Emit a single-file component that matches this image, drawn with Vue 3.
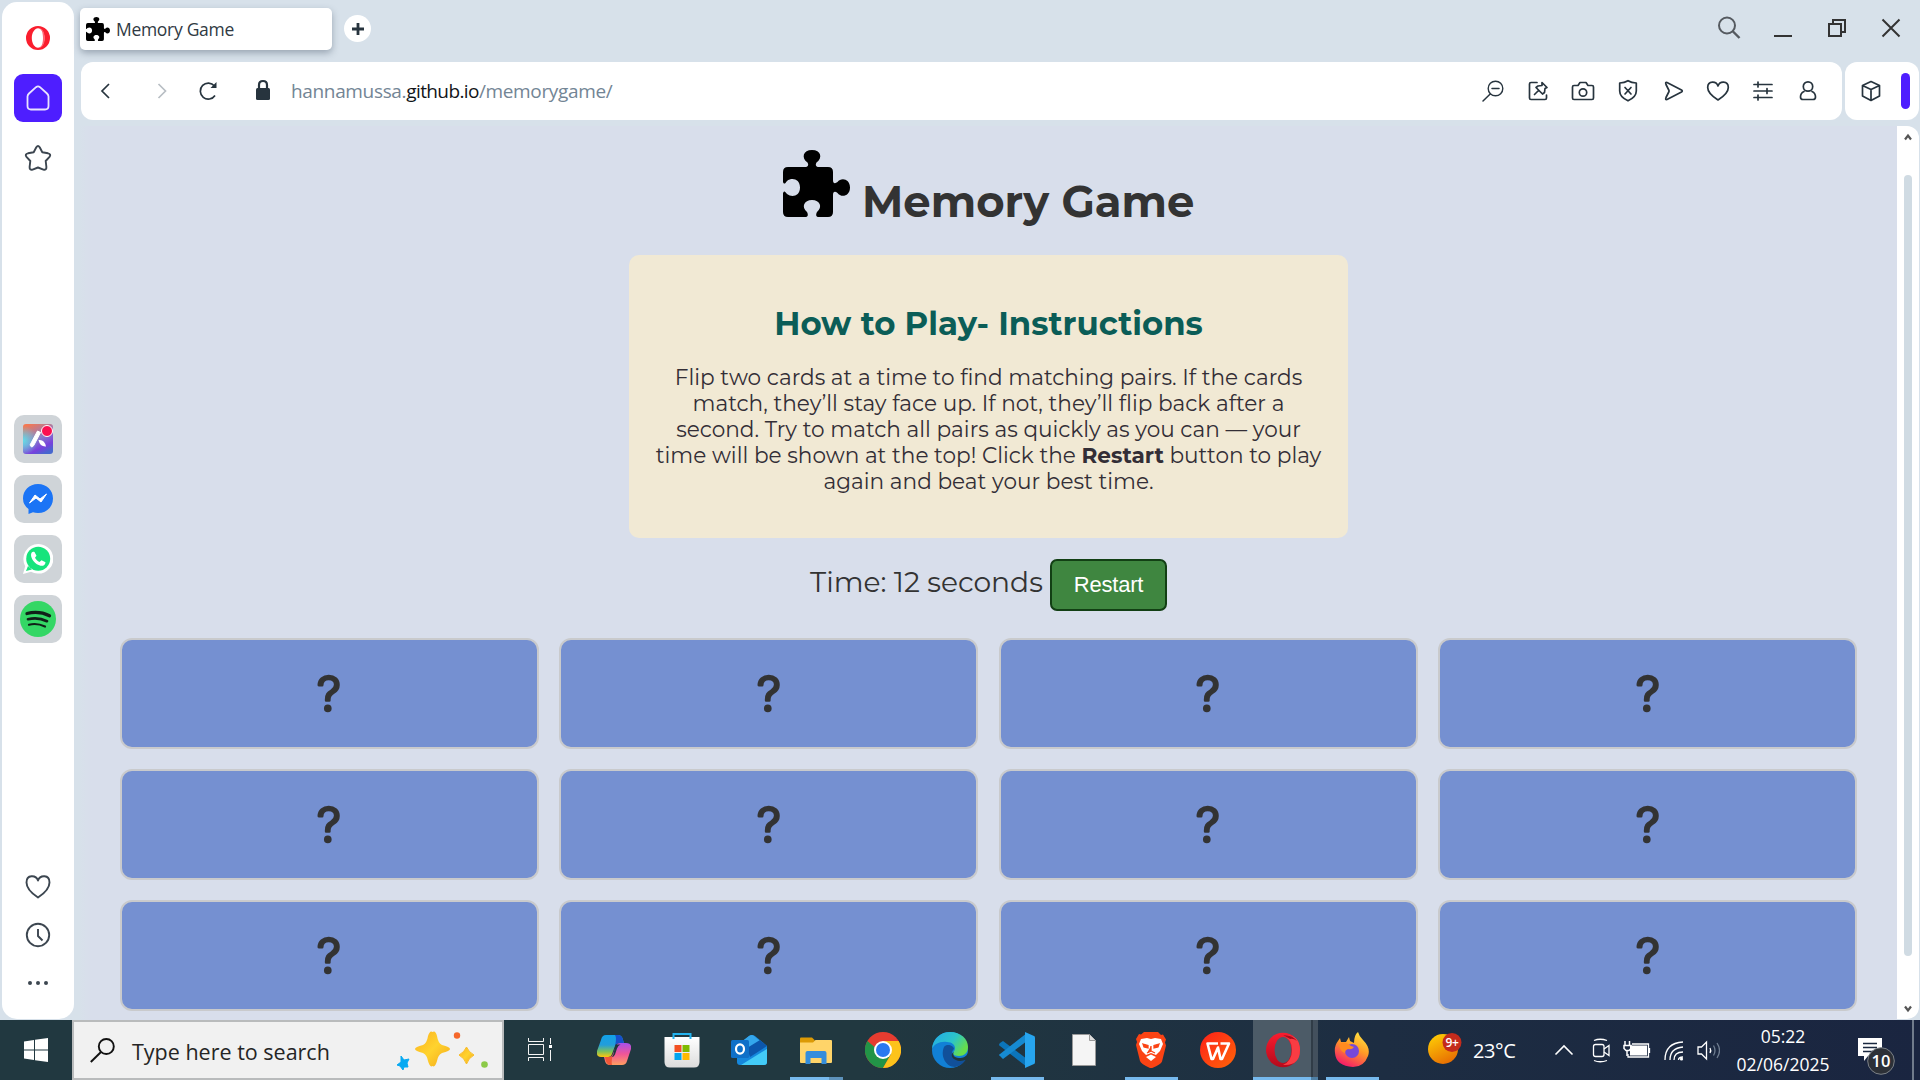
<script setup>
const cards = Array.from({ length: 12 }, (_, i) => i)
const lines = [
  'Flip two cards at a time to find matching pairs. If the cards',
  'match, they’ll stay face up. If not, they’ll flip back after a',
  'second. Try to match all pairs as quickly as you can — your'
]
const puzzle = 'M5 17H22C25 17 26 15 24.500 12.500C18 8 20 0 29 0C38 0 40 8 33.500 12.500C32 15 33 17 36 17H45Q50 17 50 22V30C50 33.500 52 34 54.500 32C58 27 67 28.500 67 37.500C67 46.500 58 48 54.500 43C52 41 50 41.500 50 45V62Q50 67 45 67H36C33 67 32.500 65 34 62C40 57 37 50 29 50C21 50 18 57 24 62C25.500 65 25 67 22 67H5Q0 67 0 62V43C1 40.500 2 41 4 44C9 48 17 46 17 37.500C17 29 9 27 4 31C2 34 1 34.500 0 32V22Q0 17 5 17Z'
</script>

<template>
  <div class="desktop">
    <div class="browser">
      <aside class="sidebar">
        <div class="side-top">
          <svg class="opera" width="24" height="24" viewBox="0 0 24 24"><path fill="#fa1e2e" fill-rule="evenodd" d="M12 0a12 12 0 1 0 0 24 12 12 0 0 0 0-24zm0 2.200c3.300 0 6.500 4.500 6.500 9.800s-3.200 9.800-6.500 9.800S5.800 17.300 5.800 12 8.700 2.200 12 2.200z"/><path d="M12.500 2.200c3 0 4.500 4.300 4.500 9.800s-1.500 9.800-4.500 9.800c4 .7 6.300-4.300 6.300-9.800s-2.300-10.500-6.300-9.800z" fill="#ff6470"/></svg>
          <div class="home"><svg width="24" height="26" viewBox="0 0 24 26"><path d="M1.500 11.500Q1.500 10 3 8.500L10 2.200Q12 .5 14 2.200L21 8.500Q22.500 10 22.500 11.500V21Q22.500 24.500 19 24.500H5Q1.500 24.500 1.500 21Z" fill="none" stroke="#e9e4ff" stroke-width="1.800"/></svg></div>
          <svg class="star" width="28" height="28" viewBox="0 0 28 28"><path d="M12.300 3.200Q14 .8 15.700 3.200L18.300 8.200L24 9.300Q27.500 10.200 25.500 12.800L21.700 17L22.400 23Q22.500 26.500 19.400 25.600L14 23.500L8.600 25.600Q5.500 26.500 5.600 23L6.300 17L2.500 12.800Q.5 10.200 4 9.300L9.700 8.200Z" fill="none" stroke="#3c4650" stroke-width="1.900" stroke-linejoin="round"/></svg>
        </div>
        <div class="side-apps">
          <div class="app-tile">
            <svg width="30" height="30" viewBox="0 0 30 30">
              <defs><linearGradient id="aria" x1="0.2" y1="0" x2="0.7" y2="1"><stop offset="0" stop-color="#f57850"/><stop offset=".5" stop-color="#8a7ec8"/><stop offset=".8" stop-color="#7840dd"/><stop offset="1" stop-color="#4767ce"/></linearGradient><radialGradient id="aria2" cx="0" cy=".55" r=".5"><stop offset="0" stop-color="#60dcea"/><stop offset="1" stop-color="#60dcea" stop-opacity="0"/></radialGradient></defs>
              <rect width="30" height="30" rx="3" fill="url(#aria)"/><rect width="30" height="30" rx="3" fill="url(#aria2)"/>
              <path d="M14.500 7l3 1.500L11 21q-1 2-2.500 2L7 21Z" fill="#fff" stroke="#fff" stroke-linejoin="round"/><path d="M15.500 16q6-1 7.500 6.500Q17 23 15.500 16z" fill="#fff"/>
            </svg>
            <i class="dot"></i>
          </div>
          <div class="app-tile"><svg width="30" height="30" viewBox="0 0 30 30"><path d="M15 0C24 0 30 6.500 30 14.500S24 29 15 29q-3 0-5-.7L5.500 30V25Q0 21 0 14.500C0 6.500 6 0 15 0Z" fill="#1b74f5"/><path d="M6.500 19L12 11l5 4L23.500 10 18 18l-5-4Z" fill="#fff" stroke="#fff" stroke-linejoin="round"/></svg></div>
          <div class="app-tile"><svg width="30" height="30" viewBox="0 0 30 30"><path d="M15 0a15 14.800 0 1 1-7 27.700L0 30l2.200-7.800A15 15 0 0 1 15 0Z" fill="#fff"/><circle cx="15.200" cy="14.800" r="12" fill="#16e47c"/><path d="M5 22l-2 5 6-1.500z" fill="#16e47c"/><path d="M8 11c0-3 2-4 3.500-3l2 3.700-1.500 2c1 2 2.500 3.200 4.500 4.300l2-1.800 4 2c-.3 3-2.500 4-5 3.500-5-1-9.500-6.700-9.500-10.700z" fill="#fff"/></svg></div>
          <div class="app-tile"><svg width="36" height="36" viewBox="0 0 36 36"><circle cx="18" cy="18" r="18" fill="#34d765"/><g fill="none" stroke="#102018" stroke-linecap="round"><path d="M7 12.500q12-3 22.500 2.200" stroke-width="3.300"/><path d="M8 18.200q10-2.500 19 2" stroke-width="2.700"/><path d="M9 23.700q8-2 16 1.800" stroke-width="2.200"/></g></svg></div>
        </div>
        <div class="side-bottom">
          <svg width="26" height="24" viewBox="0 0 26 24"><path d="M13 22.500Q1.500 15 1.500 7.500 1.500 1.500 6.500 1.300 11.500 1 13 5.500 14.500 1 19.500 1.300 24.500 1.500 24.500 7.500 24.500 15 13 22.500Z" fill="none" stroke="#3c4650" stroke-width="1.900" stroke-linejoin="round"/></svg>
          <svg width="26" height="26" viewBox="0 0 26 26" fill="none" stroke="#3c4650" stroke-width="1.900"><circle cx="13" cy="13" r="11.200"/><path d="M13 7v7l4.500 4.500"/></svg>
          <svg width="22" height="4" viewBox="0 0 22 4" fill="#3c4650"><circle cx="3" cy="2" r="2"/><circle cx="11" cy="2" r="2"/><circle cx="19" cy="2" r="2"/></svg>
        </div>
      </aside>

      <div class="main">
        <div class="tabs">
          <div class="tab"><svg width="24" height="24" viewBox="0 0 67 67"><path :d="puzzle"/></svg><span>Memory Game</span></div>
          <div class="plus"><svg width="12" height="12" viewBox="0 0 12 12"><path d="M6 0v12M0 6h12" stroke="#27343e" stroke-width="2.800"/></svg></div>
          <div class="win">
            <svg width="54" height="30" viewBox="0 0 54 30" fill="none" stroke="#555a60" stroke-width="2"><circle cx="25" cy="11.500" r="8"/><path d="M30.500 17l7 7" stroke-width="2.400"/></svg>
            <svg width="54" height="30" viewBox="0 0 54 30"><path d="M18 22h18" stroke="#333" stroke-width="2"/></svg>
            <svg width="54" height="30" viewBox="0 0 54 30" fill="none" stroke="#333" stroke-width="2"><path d="M19 10h12v12H19zM23 10V6h12v12h-4"/></svg>
            <svg width="54" height="30" viewBox="0 0 54 30" stroke="#333" stroke-width="2"><path d="M18.500 5.500l17 17M35.500 5.500l-17 17"/></svg>
          </div>
        </div>

        <div class="bars">
          <div class="address">
            <svg width="196" height="30" viewBox="0 0 196 30" fill="none" stroke="#27343e" stroke-width="1.700"><path d="M28 8l-7 7 7 7"/><path d="M77.500 8l7 7-7 7" stroke="#b8bec4"/><path d="M134 19.500A8 8 0 1 1 133.500 10"/><path d="M135.500 6v6h-6z" fill="#27343e" stroke="none"/><rect x="175" y="12" width="14" height="12" rx="1.500" fill="#27343e" stroke="none"/><path d="M178 13V9q0-4 4-4t4 4v4" stroke-width="2.200"/></svg>
            <div class="url"><span class="u1">hannamussa.</span><span class="u2">github.io</span><span class="u3">/memorygame/</span></div>
            <div class="tools">
              <svg viewBox="0 0 24 24"><circle cx="14.500" cy="9.500" r="7.300" stroke-width="1.400"/><path d="M11 9.500h7M9.200 15L2 22" stroke-width="1.500"/></svg>
              <svg viewBox="0 0 24 24"><path d="M11 3.500H5Q3.500 3.500 3.500 5V19Q3.500 20.500 5 20.500H19Q20.500 20.500 20.500 19V16M8.500 15.500l4-4M16 3.500l5 5-2 1-.5 4-2 1.500-6.500-6.500 2-1.500 4-.5z"/></svg>
              <svg viewBox="0 0 24 24"><path d="M3 6.500h4L9 3.500h6l2 3h4q1.500 0 1.500 1.500v11q0 1.500-1.500 1.500H3Q1.500 20.500 1.500 19V8Q1.500 6.500 3 6.500Z"/><circle cx="12" cy="13.500" r="3.700"/></svg>
              <svg viewBox="0 0 24 24"><path d="M12 1.700Q15.500 4 20.300 4V12Q20.300 18 12 21.800 3.700 18 3.700 12V4Q8.500 4 12 1.700ZM9 8.500l6 6.500M15 8.500L9 15"/></svg>
              <svg viewBox="0 0 24 24"><path d="M6 3.500L20.500 11Q22 12 20.500 13L6 20.500Q4 21 5 18.500L8 12.500V11.500L5 5.500Q4 3 6 3.500Z"/></svg>
              <svg viewBox="0 0 24 24"><path d="M12 21Q1.700 14.500 1.700 8.500 1.700 3.500 6.500 3.200 10.500 3 12 7 13.500 3 17.500 3.200 22.300 3.500 22.300 8.500 22.300 14.500 12 21Z"/></svg>
              <svg viewBox="0 0 24 24"><path d="M3 5.500h18M3 12h18M3 18.500h18M7 3v5M16 9.500v5M7 16v5"/></svg>
              <svg viewBox="0 0 24 24"><circle cx="12" cy="7.500" r="4.700"/><path d="M8 12.500Q4.500 14 4.500 18 4.500 20.500 7 20.500H17Q19.500 20.500 19.500 18 19.500 14 16 12.500"/></svg>
            </div>
          </div>
          <div class="ext"><svg width="24" height="24" viewBox="0 0 24 24" fill="none" stroke="#27343e" stroke-width="1.700" stroke-linejoin="round"><path d="M12 2.500l8.500 4v10.500L12 21.500 3.500 17V6.500ZM3.500 6.500L12 10.500l8.500-4M12 10.500v11"/></svg><i></i></div>
        </div>

        <div class="view">
          <div class="page">
            <h1><svg width="67" height="67" viewBox="0 0 67 67"><path :d="puzzle"/></svg><span>Memory Game</span></h1>
            <section class="howto">
              <h2>How to Play- Instructions</h2>
              <p>
                <span v-for="(l, i) in lines" :key="i">{{ l }}</span>
                <span>time will be shown at the top! Click the <b>Restart</b> button to play</span>
                <span>again and beat your best time.</span>
              </p>
            </section>
            <div class="status"><span>Time: 12 seconds</span><button>Restart</button></div>
            <div class="grid">
              <div v-for="c in cards" :key="c" class="card"><svg width="60" height="60" viewBox="0 0 60 60"><text x="30" y="47" text-anchor="middle">?</text></svg></div>
            </div>
          </div>
          <div class="scroll">
            <svg width="10" height="8" viewBox="0 0 10 8"><path d="M2 6.500l3-4 3 4" fill="none" stroke="#555" stroke-width="2.200"/></svg>
            <i></i>
            <svg width="10" height="8" viewBox="0 0 10 8"><path d="M2 1.500l3 4 3-4" fill="none" stroke="#555" stroke-width="2.200"/></svg>
          </div>
        </div>
      </div>
    </div>

    <div class="taskbar">
      <div class="start"><svg width="24" height="24" viewBox="0 0 24 24" fill="#fff"><path d="M0 3.400L10 2v9.500H0ZM11 1.800L24 0v11.500H11ZM0 12.500h10V22L0 20.600ZM11 12.500h13V24L11 22.200Z"/></svg></div>
      <div class="search">
        <svg width="25" height="25" viewBox="0 0 25 25" fill="none" stroke="#111" stroke-width="1.900"><circle cx="16.300" cy="8.500" r="7.500"/><path d="M11 14L.8 24"/></svg>
        <span>Type here to search</span>
        <svg class="sparkles" width="94" height="44" viewBox="0 0 94 44"><defs><linearGradient id="gold" x1="0" y1="0" x2="1" y2="1"><stop offset="0" stop-color="#fbb020"/><stop offset=".5" stop-color="#ffd32e"/><stop offset="1" stop-color="#f3a71b"/></linearGradient></defs><path d="M36.500 4Q39.500 2 41 8Q42 15 46 17Q54 19 54 21Q54 23 46 25Q42 27 41 33Q39 40 36.500 38Q34 40 32 33Q31 27 27 25Q19 23 19 21Q19 19 27 17Q31 15 32 8Q34 2 36.500 4Z" fill="url(#gold)"/><path d="M70.500 19Q72.500 24 78 27Q72.500 30 70.500 36Q68.500 30 63 27Q68.500 24 70.500 19Z" fill="url(#gold)" stroke="#f9bd2a"/><path d="M5 28l3 4 5-1-2 4 1 4-4 0-1 3-3-4-3-1 4-3z" fill="#05a9f2" stroke="#05a9f2" stroke-linejoin="round"/><circle cx="61" cy="7.500" r="3.200" fill="#f5672a"/><circle cx="88.500" cy="36.500" r="3.300" fill="#8cca48"/></svg>
      </div>
      <div class="cell taskview"><svg width="24" height="24" viewBox="0 0 24 24" fill="none" stroke="#f4f4f4"><path d="M.5 0v3.500h15V0M.5 6.500h15v10H.5zM.5 23v-3.500h15V23M22.500 0v6M22.500 12v11"/><path d="M21 7h3v3h-3z" fill="#fff" stroke="none"/></svg></div>

      <div class="cell copilot"><svg width="34" height="32" viewBox="0 0 34 32"><defs><linearGradient id="cp1" x1="0" y1="0" x2="0" y2="1"><stop offset="0" stop-color="#11a1e8"/><stop offset=".45" stop-color="#229ddb"/><stop offset=".75" stop-color="#7cc15d"/><stop offset="1" stop-color="#fec70d"/></linearGradient><linearGradient id="cp2" x1="0" y1="0" x2="0" y2="1"><stop offset="0" stop-color="#a650ec"/><stop offset=".5" stop-color="#f05597"/><stop offset="1" stop-color="#ff9e60"/></linearGradient></defs><path d="M9 1h12q4 0 5 5l1 3h-5q-3 0-4 3l-3 8q-1 3-4 3H4q-5 0-4-6L4 6q1-5 5-5z" fill="url(#cp1)"/><path d="M18 1h3q4 0 5 5l1 3h-5q-3 0-4 3 2-8 0-11z" fill="#174fcb"/><path d="M27 9h2q6 0 5 6l-4 12q-1 4-5 4H13q-4 0-5-4l-1-4h5q3 0 4-3l3-8q1-3 4-3z" fill="url(#cp2)"/><path d="M8 23h4q3 0 4-3-2 7-1 11h-2q-4 0-5-8z" fill="#f15739"/><path d="M18.500 10.500h5q-2.500 1-3.500 4l-2 6q-1 2.500-3.500 2.500 1.500-1 2-3z" fill="#21363f"/></svg></div>
      <div class="cell"><svg width="36" height="36" viewBox="0 0 36 36"><defs><linearGradient id="store" x1="0" y1="0" x2="0" y2="1"><stop offset="0" stop-color="#fff"/><stop offset="1" stop-color="#dcdcdc"/></linearGradient></defs><path d="M.5 5h35v25q0 5.500-5.500 5.500H6Q.5 35.500.5 30Z" fill="url(#store)"/><path d="M9.500 7V2h17v5" fill="none" stroke="#23b3ef" stroke-width="2"/><path d="M10.500 13h7v7h-7z" fill="#f25022"/><path d="M18.500 13h7v7h-7z" fill="#7fba00"/><path d="M10.500 21h7v7h-7z" fill="#00a4ef"/><path d="M18.500 21h7v7h-7z" fill="#ffb900"/></svg></div>
      <div class="cell"><svg width="36" height="32" viewBox="0 0 36 32"><path d="M6 12L18 2q3-2 6 0l12 10v16q0 3-3 3H9q-3 0-3-3z" fill="#1587dc"/><path d="M6 11L18 2q3-2 5 0l6 5-18 13-5-4z" fill="#34a7ec"/><path d="M16 14l13-8 7 6-17 11z" fill="#0c56ac"/><path d="M10 31l26-16v13q0 3-3 3z" fill="#43cbf7"/><rect y="6" width="18" height="18" rx="1.500" fill="#0f70c8"/><ellipse cx="9" cy="15" rx="4" ry="4.700" fill="none" stroke="#fff" stroke-width="2.200"/></svg></div>
      <div class="cell run"><svg width="32" height="27" viewBox="0 0 32 27"><path d="M0 1.500Q0 .5 1 .5h11l3 3v4H0Z" fill="#dc9a05"/><path d="M0 5.500h13l2.500-2.500H31q1 0 1 1v21q0 1-1 1H1q-1 0-1-1Z" fill="#ffd469"/><path d="M5.500 27V16q0-2 2-2h17q2 0 2 2v11h-5v-6h-11v6z" fill="#348ddb"/></svg><i class="extra"></i></div>
      <div class="cell"><svg width="36" height="36" viewBox="0 0 36 36"><circle cx="18" cy="18" r="18" fill="#e63c30"/><path d="M2.400 9A18 18 0 0 0 18 36l8-14H18z" fill="#229447"/><path d="M18 36A18 18 0 0 0 33.600 9H18l7.800 13.500z" fill="#fcc31b"/><circle cx="18" cy="18" r="9" fill="#fff"/><circle cx="18" cy="18" r="7" fill="#2a79f0"/></svg></div>
      <div class="cell"><svg width="36" height="36" viewBox="0 0 36 36"><defs><linearGradient id="edge" x1="0" y1="0" x2="1" y2=".5"><stop offset="0" stop-color="#22a9e9"/><stop offset=".6" stop-color="#2cc4c9"/><stop offset="1" stop-color="#66dd4b"/></linearGradient></defs><circle cx="18" cy="18" r="18" fill="#1180d6"/><path d="M0 17C1 6 9 0 18 0c11 0 18 7 18 15 0 6-4 9-9 9-4 0-6-1-6-3 0-1 2-2 2-5 0-3-3-6-8-6C8 9 2 12 0 17z" fill="url(#edge)"/><path d="M12 15c-4 9 2 20 11 20 5-1 9-4 11-8-4 2-7 2-10 0-5-2-5-8-2-10 0-3-7-6-10-2z" fill="#11509a"/><path d="M22 20c-2 2 0 6 5 6 4 0 7-1 9-5v7l-3 0c-4 2-8 1-11-1-3-2-3-6 0-7z" fill="#20363e"/></svg></div>
      <div class="cell run"><svg width="36" height="36" viewBox="0 0 36 36"><path d="M1 11l3-2 24 18v8L1 14q-2-1 0-3z" fill="#0b75bb"/><path d="M1 24l3 3L28 9V1L1 22q-2 1 0 2z" fill="#168ad1"/><path d="M26 0l9 4q1 0 1 2v24q0 2-1 2l-9 4z" fill="#27a5ef"/></svg></div>
      <div class="cell"><svg width="24" height="32" viewBox="0 0 24 32"><path d="M.5.500h17l6 6v25H.5z" fill="#f5f5f5" stroke="#999"/><path d="M17.500.5v6h6" fill="#ddd" stroke="#999"/></svg></div>
      <div class="cell run"><svg width="30" height="36" viewBox="0 0 30 36"><path d="M8 0h14l3 3 2-.5 3 5-1 3 1 3-4 16q-1 3-11 7Q5 32 4 29L0 13l1-3-1-3 3-5 2 .5z" fill="#fb4314"/><path d="M5 7l6-1 4 1 4-1 6 1 2 5-3 7-4 4-5-2-5 2-4-4-3-7zM10 25l5-2.500 5 2.500-5 4z" fill="#fff"/><path d="M7 12l5 1.500 0 2.500-4-1zM23 12l-5 1.500v2.500l4-1zM15 14v5l-4 2M15 19l4 2" fill="#fb4314" stroke="#fb4314" stroke-width="1.300"/></svg></div>
      <div class="cell"><svg width="36" height="36" viewBox="0 0 36 36"><defs><linearGradient id="wps" x1="0" y1="0" x2="1" y2="1"><stop offset="0" stop-color="#fd2019"/><stop offset="1" stop-color="#ff6508"/></linearGradient></defs><circle cx="18" cy="18" r="18" fill="url(#wps)"/><path d="M18 11.500H7.500l4 15.500H13L18 15.500 20.500 27H22L29 11.500H20.500" fill="none" stroke="#fff" stroke-width="2.600" stroke-linejoin="round"/></svg></div>
      <div class="cell run active"><svg width="36" height="36" viewBox="0 0 36 36"><defs><linearGradient id="op" x1="0" y1="0" x2="0" y2="1"><stop offset="0" stop-color="#fa1c2f"/><stop offset="1" stop-color="#b40a1c"/></linearGradient></defs><ellipse cx="18" cy="18" rx="17" ry="17.200" fill="url(#op)"/><path d="M18 3q17-1 17 15T18 33q9-4 9-15T18 3z" fill="#f93c43"/><path d="M18 3q10 0 14 6-4-3-7-2z" fill="#a9091b"/><ellipse cx="18" cy="18" rx="8.500" ry="13" fill="#4c5b67"/></svg></div>
      <div class="cell run"><svg width="36" height="36" viewBox="0 0 36 36"><defs><linearGradient id="fx" x1=".8" y1="0" x2=".3" y2="1"><stop offset="0" stop-color="#ffe743"/><stop offset=".45" stop-color="#ff9c26"/><stop offset="1" stop-color="#f5156c"/></linearGradient></defs><path d="M4 9l2-3 1 4 5 0 3-5 1 4 4 2q0-8 4-11 1 4 5 8 8 8 5 16-4 11-15 11Q2 34 1 21 0 14 4 9z" fill="url(#fx)"/><circle cx="18" cy="19" r="7" fill="#7748d8"/><path d="M5 12q6-4 12 2l3 1q-2 3-6 2-3 1-3 4-5-1-6-9z" fill="#ff8b20"/></svg></div>

      <div class="tray">
        <div class="weather"><svg width="34" height="32" viewBox="0 0 34 32"><defs><linearGradient id="sun" x1=".2" y1="0" x2=".7" y2="1"><stop offset="0" stop-color="#fecd05"/><stop offset="1" stop-color="#e76b02"/></linearGradient></defs><circle cx="15" cy="16" r="15" fill="url(#sun)"/><circle cx="24" cy="9.500" r="9.500" fill="#c42b1c"/><text x="24" y="14" text-anchor="middle" fill="#fff" font-size="12" font-weight="600">9+</text></svg><span>23°C</span></div>
        <svg class="sys" width="170" height="30" viewBox="0 0 170 30" fill="none" stroke="#fff" stroke-width="1.300">
          <path d="M5.500 19.500l8.500-8.500 8.500 8.500" stroke-width="1.600"/>
          <rect x="43.500" y="9.500" width="10.500" height="12" rx="2"/><path d="M54 14l5-3.500v10L54 17M44 5.500q6-2.500 13 0M44 25.500q6 2.500 13 0"/>
          <rect x="80" y="10.500" width="17" height="10" fill="#fff" stroke="none"/><path d="M82 9h16.500v13H78v-3M99.500 13v5"/><path d="M75 6v4M79.500 6v4M74 10.500h7v3l-2 2h-3l-2-2zM77 16v5" stroke-width="1.500"/>
          <path d="M115 25q0-17 18-18M120 25q0-12 13-13M124 25q0-8 9-8M128.500 25q0-3 4.500-3"/><circle cx="131.500" cy="24" r="1.600" fill="#fff" stroke="none"/>
          <path d="M148 12h3.500l5-5v17l-5-5H148z"/><path d="M160 13q1.500 2.500 0 5"/><path d="M163.500 10.500q3 5 0 10M167 8q5 7.500 0 15" stroke="#6f7d90"/>
        </svg>
        <div class="clock"><span>05:22</span><span>02/06/2025</span></div>
        <svg class="note" width="40" height="46" viewBox="0 0 40 46"><path d="M1 5h24v18H11l-4 5v-5H1z" fill="#fff"/><path d="M6 10.500h14M6 14.500h14M6 18.500h10" stroke="#1b2940" stroke-width="1.300"/><circle cx="24" cy="28" r="13.300" fill="#2c3037" stroke="#7b8188"/><text x="24" y="34" text-anchor="middle" fill="#fff" font-size="16.500" font-weight="600">10</text></svg>
        <i class="edge-line"></i>
      </div>
    </div>
  </div>
</template>

<style>
html, body { margin: 0; overflow: hidden; }
</style>

<style scoped>
* { box-sizing: border-box; }
svg { display: block; flex: none; }
.desktop { width: 1920px; height: 1080px; display: flex; flex-direction: column; font-family: "Open Sans", sans-serif; overflow: hidden; }
.browser { height: 1020px; display: flex; background: #d7e1ea; }
.sidebar { width: 72px; height: 1017px; margin: 2px 0 0 2px; background: #fff; border-radius: 15px; display: flex; flex-direction: column; align-items: center; }
.side-top { height: 412px; display: flex; flex-direction: column; align-items: center; padding-top: 24px; }
.home { width: 48px; height: 48px; margin: 24px 0 22px; border-radius: 9px; background: #4e1eff; display: flex; align-items: center; justify-content: center; }
.side-apps { display: flex; flex-direction: column; gap: 12px; height: 459px; padding-top: .5px; }
.app-tile { position: relative; width: 48px; height: 48px; border-radius: 10px; background: #cfd4d8; display: flex; align-items: center; justify-content: center; }
.dot { position: absolute; left: 27px; top: 10px; width: 12px; height: 12px; border-radius: 50%; background: #fb1050; border: 1px solid #fff; }
.side-bottom { display: flex; flex-direction: column; align-items: center; gap: 23px; padding-top: 2px; }
.side-bottom svg:last-child { margin-top: 10px; }

.main { flex: 1; display: flex; flex-direction: column; margin-left: 6px; }
.tabs { height: 62px; display: flex; align-items: flex-start; }
.tab { width: 252px; height: 42px; margin-top: 8px; background: #fff; border-radius: 5px; box-shadow: 0 3px 7px rgba(60, 75, 95, .4); display: flex; align-items: center; padding-left: 6px; gap: 6px; font-size: 17.500px; color: #303a43; letter-spacing: -.3px; }
.plus { width: 27px; height: 27px; margin: 15px 0 0 12px; border-radius: 50%; background: #fff; display: flex; align-items: center; justify-content: center; }
.win { display: flex; margin: 14px 2px 0 auto; }
.bars { display: flex; gap: 3px; height: 58px; padding-left: 1px; }
.address { width: 1761px; background: #fff; border-radius: 12px; display: flex; align-items: center; padding-right: 22px; }
.url { margin-left: 14px; font-size: 19px; letter-spacing: -.34px; white-space: nowrap; color: #738595; }
.u2 { color: #111519; letter-spacing: -.6px; }
.tools { margin-left: auto; display: flex; gap: 21px; }
.tools svg { width: 24px; height: 24px; fill: none; stroke: #27343e; stroke-width: 1.700; stroke-linejoin: round; stroke-linecap: round; }
.ext { width: 74px; background: #fff; border-radius: 12px; display: flex; align-items: center; padding-left: 14px; }
.ext i { width: 9px; height: 36px; margin-left: 18px; border-radius: 5px; background: #4e1eff; }

.view { flex: 1; margin-top: 6px; display: flex; min-height: 0; }
.page { width: 1817px; background: linear-gradient(90deg, #d7e1ea 0, #d8dfeb 6px, #d8deeb 12px); display: flex; flex-direction: column; align-items: center; color: #333; font-family: Montserrat, Inter, sans-serif; }
h1 { margin: 24px 0 0; height: 105px; display: flex; align-items: flex-start; gap: 12px; font-size: 43.300px; line-height: 50px; font-weight: 700; width: 411px; white-space: nowrap; }
h1 span { margin-top: 27px; }
.howto { width: 719px; height: 283px; border-radius: 10px; background: #f1e9d4; padding-top: 50px; text-align: center; }
h2 { margin: 0; font-size: 32.400px; line-height: 38px; color: #0b5d57; font-weight: 700; white-space: nowrap; }
p { margin: 21px 0 0; font-size: 21.600px; font-weight: 400; line-height: 26px; color: #332e36; display: flex; flex-direction: column; align-items: center; white-space: nowrap; }
p b { font-weight: 700; }
.status { height: 78px; margin-top: 21px; display: flex; align-items: flex-start; gap: 7px; width: 359px; font-size: 28.100px; font-weight: 400; white-space: nowrap; }
.status span { width: 234px; line-height: 46px; padding-left: 1px; }
button { width: 117px; height: 52px; padding: 0; font: 22px "Liberation Sans", Arial, sans-serif; letter-spacing: -.2px; color: #fff; background: #3f8640; border: 2px solid #123f14; border-radius: 7px; }
.grid { width: 1737px; display: grid; grid-template-columns: repeat(4, 1fr); grid-auto-rows: 111px; gap: 20px 20.700px; margin-top: 1px; }
.card { background: #7590d1; border: 2px solid #c9cacc; border-radius: 12px; display: flex; align-items: center; justify-content: center; }
.card text { font: 300 48.500px Inter, sans-serif; fill: #333; stroke: #333; stroke-width: 2.600px; stroke-linejoin: round; }
.scroll { width: 22px; height: 893px; background: #fff; border-radius: 0 12px 12px 0; display: flex; flex-direction: column; align-items: center; padding: 7px 0 6px; }
.scroll i { width: 8px; height: 781px; border-radius: 4px; background: #d0dbe3; margin: 34px 0 auto; }

.taskbar { height: 60px; display: flex; background: linear-gradient(90deg, #213840 0, #213840 45%, #1d2d42 72%, #1a2540 100%); color: #fff; }
.taskbar > div { flex: none; }
.start { width: 72px; display: flex; align-items: center; justify-content: center; }
.search { width: 432px; background: #f1f1f1; border: 2px solid #b9bbbc; display: flex; align-items: center; padding-left: 16px; font-size: 21.500px; color: #252525; }
.search span { margin-left: 17px; width: 264px; margin-top: 2px; white-space: nowrap; }
.sparkles { margin-bottom: 1px; }
.cell { position: relative; width: 67px; display: flex; align-items: center; justify-content: center; padding-right: 2px; }
.taskview { width: 72px; margin-right: 6px; padding-right: 0; }
.copilot { padding-right: 3px; }
.run::after { content: ""; position: absolute; left: 7px; bottom: 0; width: 53px; height: 3px; background: #76b9ed; }
.extra { position: absolute; z-index: 1; right: 7px; bottom: 0; width: 14px; height: 3px; background: #5d92bb; }
.active { width: 65px; margin: 0 1px; padding-right: 6px; background: linear-gradient(90deg, #4c5b67 58px, #303c47 58px, #303c47 60px, #43505d 60px); }
.active::after { left: 0; width: 65px; background: linear-gradient(90deg, #76b9ed 58px, #4f7fa4 58px); }
.tray { margin-left: auto; display: flex; width: 492px; }
.weather { display: flex; align-items: center; gap: 11px; width: 122px; font-size: 20px; letter-spacing: -.4px; }
.weather svg { margin-bottom: 2px; }
.weather span { margin-top: 1px; }
.sys { margin: 15px 0 0; }
.clock { width: 110px; margin-left: 8px; display: flex; flex-direction: column; align-items: center; font-size: 17.500px; line-height: 28px; padding-top: 2px; letter-spacing: 0; }
.note { margin: 13px 0 0 19px; }
.edge-line { width: 2px; background: #707b8b; margin-left: 15px; }
</style>
